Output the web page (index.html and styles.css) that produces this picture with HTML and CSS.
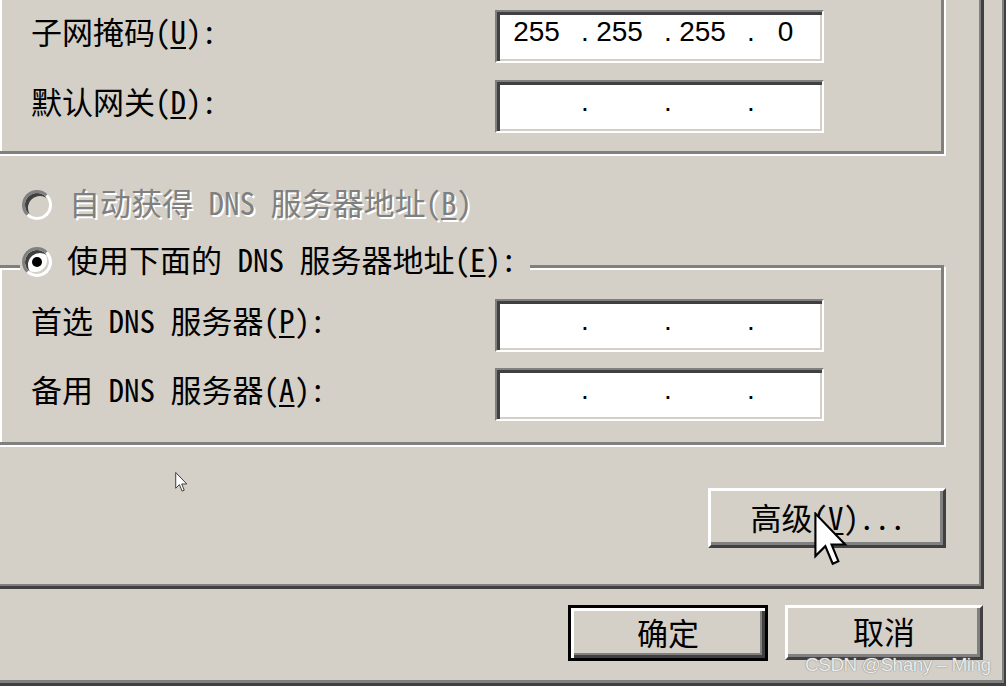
FILE: index.html
```html
<!DOCTYPE html>
<html lang=zh-CN>
<head>
  <meta charset=utf-8>
  <title>Internet 协议 (TCP/IP) 属性</title>
  <meta name=viewport content='width=device-width, initial-scale=1.0'>
  <link rel="stylesheet" href="styles.css">
</head>
<body>
  <div class=dialog>
    <div class=page>

      <div class=group>
        <div class=row>
          <label>子网掩码(<u>U</u>):</label>
          <div class=ip><span class=oct>255</span><span class=dot>.</span><span class=oct>255</span><span class=dot>.</span><span class=oct>255</span><span class=dot>.</span><span class=oct>0</span></div>
        </div>
        <div class=row>
          <label>默认网关(<u>D</u>):</label>
          <div class=ip><span class=oct></span><span class=dot>.</span><span class=oct></span><span class=dot>.</span><span class=oct></span><span class=dot>.</span><span class=oct></span></div>
        </div>
      </div>

      <div class='option off'>
        <span class=radio></span>
        <span class=text>自动获得 DNS 服务器地址(<u>B</u>)</span>
      </div>

      <div class='group dns'>
        <div class='option legend'>
          <span class='radio on'></span>
          <span class=text>使用下面的 DNS 服务器地址(<u>E</u>):</span>
        </div>
        <div class=row>
          <label>首选 DNS 服务器(<u>P</u>):</label>
          <div class=ip><span class=oct></span><span class=dot>.</span><span class=oct></span><span class=dot>.</span><span class=oct></span><span class=dot>.</span><span class=oct></span></div>
        </div>
        <div class=row>
          <label>备用 DNS 服务器(<u>A</u>):</label>
          <div class=ip><span class=oct></span><span class=dot>.</span><span class=oct></span><span class=dot>.</span><span class=oct></span><span class=dot>.</span><span class=oct></span></div>
        </div>
      </div>

      <div class=actions>
        <button class='btn advanced'>高级(<u>V</u>)...</button>
      </div>
    </div>

    <div class=footer>
      <button class='btn default'>确定</button>
      <button class='btn cancel'>取消</button>
    </div>

    <!-- mouse pointers lying over the dialog -->
    <svg class=pointer width=13 height=21 viewBox='0 0 12 20'>
      <polygon points='0.5,0.5 0.5,15.5 4,12 6.6,18.2 8.6,17.3 6.2,11.4 11,11.4' fill='#fff' stroke='#333' stroke-width='0.9'/>
    </svg>
    <svg class=cursor width=34 height=57 viewBox='0 0 12 20'>
      <polygon points='0.5,0.5 0.5,15.5 4,12 6.6,18.2 8.6,17.3 6.2,11.4 11,11.4' fill='#fff' stroke='#000' stroke-width='0.75'/>
    </svg>

    <span class=mark>CSDN @Shany – Ming</span>
  </div>
</body>
</html>
```

FILE: styles.css
```css
/* classic dialog, everything scaled up about 2.6x */

* {
  box-sizing: border-box;
}

html,
body {
  margin: 0;
  background: #d4d0c8;
  overflow: hidden;
}

body {
  font-family: "Noto Sans Mono CJK SC", "Noto Sans CJK SC", sans-serif;
  font-size: 31px;
  color: #000;
}

u {
  text-underline-offset: 3px;
  text-decoration-thickness: 2px;
}

.dialog {
  position: relative;
  width: 1006px;
  height: 686px;
  border-right: 2px solid #404040;
  border-bottom: 3px solid #404040;
  box-shadow: inset -2px -3px #808080;
  overflow: hidden;
}

/* tab page, its left and top edges are cut off */

.page {
  width: 1004px;
  height: 609px;
  margin: -20px 0 0 -20px;
  padding: 10px 0 0 17px;
  border-right: 3px solid #404040;
  border-bottom: 3px solid #404040;
  box-shadow: inset -2px -2px #808080;
}

/* etched group boxes */

.group {
  width: 947px;
  display: flex;
  flex-direction: column;
  gap: 17px;
  padding: 17px 0 18px 31px;
  border: 3px solid #808080;
  box-shadow: inset 2px 2px #fff, 2px 2px #fff;
}

.group.dns {
  margin-top: 45px;
  gap: 0;
  padding: 0 0 21px 31px;
}

.dns .row + .row {
  margin-top: 16px;
}

.row {
  display: flex;
  align-items: center;
}

.row label {
  width: 464px;
  line-height: 1;
  padding-bottom: 12px;
}

/* ip address fields */

.ip {
  width: 329px;
  height: 53px;
  display: flex;
  align-items: center;
  padding: 0 0 10px 9px;
  background: #fff;
  border: 2px solid;
  border-color: #808080 #fff #fff #808080;
  box-shadow: inset 3px 3px #404040, inset -2px -2px #d4d0c8;
  font-family: "Liberation Sans", sans-serif;
  font-size: 28px;
  line-height: 1;
}

.oct {
  width: 61px;
  text-align: center;
}

.dot {
  width: 8px;
  margin-left: 14px;
  text-align: center;
}

/* radio buttons */

.option {
  display: flex;
  align-items: center;
  gap: 17px;
  height: 30px;
  line-height: 1;
}

.option.off {
  margin: 36px 0 0 25px;
}

.option.legend {
  width: fit-content;
  margin: -21px 0 22px -11px;
  padding: 0 13px 0 2px;
  gap: 15px;
  background: #d4d0c8;
}

.option .text {
  padding-bottom: 8px;
}

.off .text {
  color: #808080;
  text-shadow: 2px 2px #fff;
}

.radio {
  flex: none;
  width: 30px;
  height: 30px;
  display: grid;
  place-items: center;
  border-radius: 50%;
  border: 3px solid;
  border-color: #808080 #fff #fff #808080;
  box-shadow: inset 3px 3px #404040, inset -2px -2px #d4d0c8;
  background: #fff;
}

.off .radio {
  background: #d4d0c8;
}

.radio.on:after {
  content: '';
  width: 10px;
  height: 10px;
  border-radius: 50%;
  background: #000;
}

/* buttons */

.btn {
  display: flex;
  align-items: center;
  justify-content: center;
  width: 200px;
  height: 56px;
  padding: 0 0 4px;
  font: inherit;
  line-height: 1;
  color: #000;
  background: #d4d0c8;
  border: 3px solid;
  border-color: #fff #404040 #404040 #fff;
  box-shadow: inset -3px -3px #808080;
}

.btn.default {
  border-color: #000;
  box-shadow: inset 3px 3px #fff, inset -3px -3px #404040, inset -5px -5px #808080;
}

.btn.cancel {
  width: 198px;
  height: 55px;
}

.actions {
  margin-top: 43px;
}

.btn.advanced {
  width: 238px;
  height: 60px;
  margin-left: 711px;
  padding-left: 2px;
}

.footer {
  display: flex;
  align-items: flex-start;
  justify-content: flex-end;
  gap: 17px;
  margin-top: 16px;
  padding-right: 21px;
}

/* overlays */

.pointer {
  position: absolute;
  left: 175px;
  top: 472px;
}

.cursor {
  position: absolute;
  left: 814px;
  top: 512px;
}

.mark {
  position: absolute;
  left: 805px;
  top: 654px;
  white-space: nowrap;
  font-family: "Liberation Sans", sans-serif;
  font-size: 19px;
  letter-spacing: -0.5px;
  color: #ececec;
  text-shadow: 0 0 1px #7a7a7a, 0 0 1px #9a9a9a;
}
```
